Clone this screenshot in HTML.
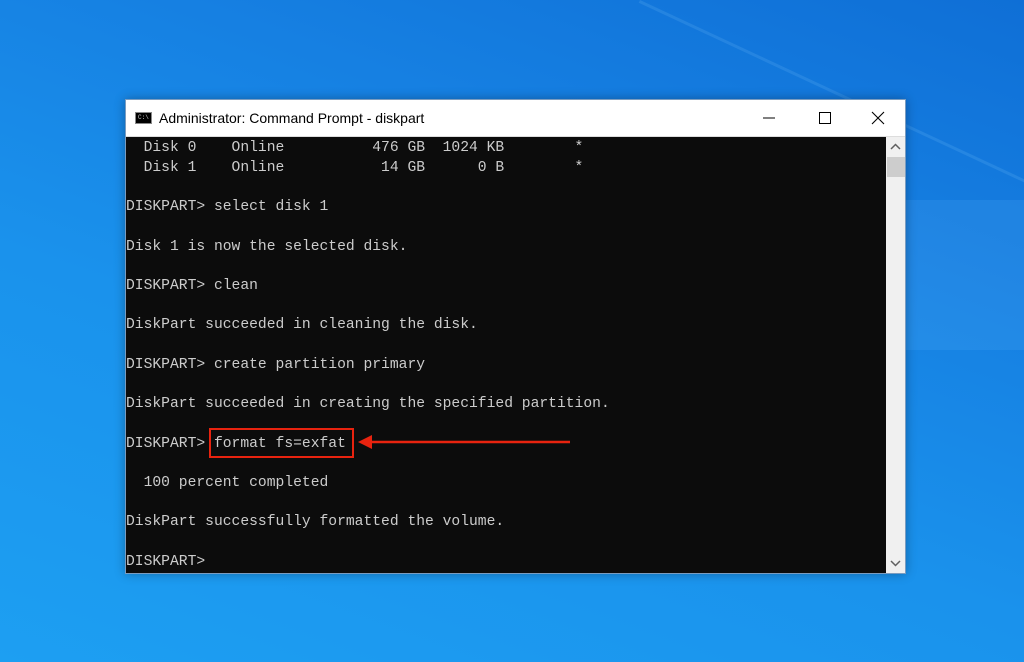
<!DOCTYPE html>
<html><head><style>
html,body{margin:0;padding:0}
body{width:1024px;height:662px;overflow:hidden;position:relative;
background:linear-gradient(200deg, #0f6fd6 0%, #1680e2 30%, #1a92ec 60%, #1d9ff2 100%);}
.streak{position:absolute;background:rgba(140,210,255,0.15);transform-origin:0 0}
.win{position:absolute;left:125px;top:99px;width:781px;height:475px;background:#0c0c0c;box-shadow:0 0 10px rgba(0,0,0,0.3);border:1px solid #7a9cc0;box-sizing:border-box}
.title{position:absolute;left:0;top:0;width:100%;height:36px;background:#fff;border-bottom:1px solid #ddd;font-family:"Liberation Sans",sans-serif;font-size:14px;color:#000}
.title .t{position:absolute;left:33px;top:10px}
.icon{position:absolute;left:9px;top:12px;width:17px;height:12px;background:#000;border:1px solid #888;box-sizing:border-box}
.icon span{position:absolute;left:2px;top:1px;color:#ccc;font-size:6px;font-family:"Liberation Mono",monospace}
.term{position:absolute;left:0;top:39px;width:761px;font-family:"Liberation Mono",monospace;font-size:14.67px;line-height:19.7px;color:#cccccc;white-space:pre}
.sb{position:absolute;right:0;top:37px;width:19px;bottom:0;background:#f0f0f0}
.thumb{position:absolute;left:1px;top:20px;width:18px;height:20px;background:#cdcdcd}
.box{position:absolute;left:83px;top:328px;width:145px;height:30px;border:2px solid #e8230f;box-sizing:border-box}
</style></head><body>
<div class="streak" style="left:640px;top:0;width:700px;height:3px;transform:rotate(25deg)"></div>
<div class="streak" style="left:906px;top:200px;width:130px;height:150px;background:rgba(120,200,255,0.12)"></div>
<div class="win">
 <div class="title"><div class="icon"><span>C:\</span></div><div class="t">Administrator: Command Prompt - diskpart</div>
  <svg style="position:absolute;left:630px;top:10px" width="130" height="16" viewBox="0 0 130 16">
   <line x1="7" y1="8" x2="19" y2="8" stroke="#000" stroke-width="1"/>
   <rect x="63.5" y="2.5" width="11" height="11" fill="none" stroke="#000"/>
   <path d="M116 2 L128 14 M128 2 L116 14" stroke="#000" stroke-width="1.1"/>
  </svg>
 </div>
 <div class="term">  Disk 0    Online          476 GB  1024 KB        *
  Disk 1    Online           14 GB      0 B        *

DISKPART&gt; select disk 1

Disk 1 is now the selected disk.

DISKPART&gt; clean

DiskPart succeeded in cleaning the disk.

DISKPART&gt; create partition primary

DiskPart succeeded in creating the specified partition.

DISKPART&gt; format fs=exfat

  100 percent completed

DiskPart successfully formatted the volume.

DISKPART&gt;</div>
 <div class="box"></div>
 <svg style="position:absolute;left:230px;top:334px" width="215" height="16" viewBox="0 0 215 16">
  <line x1="12" y1="8" x2="214" y2="8" stroke="#e8230f" stroke-width="2.5"/>
  <path d="M2 8 L16 1 L16 15 Z" fill="#e8230f"/>
 </svg>
 <div class="sb"><div class="thumb"></div>
  <svg style="position:absolute;left:4px;top:6px" width="11" height="8"><path d="M1 6 L5.5 1.5 L10 6" stroke="#606060" stroke-width="1.5" fill="none"/></svg>
  <svg style="position:absolute;left:4px;bottom:6px" width="11" height="8"><path d="M1 2 L5.5 6.5 L10 2" stroke="#606060" stroke-width="1.5" fill="none"/></svg>
 </div>
</div>
</body></html>
